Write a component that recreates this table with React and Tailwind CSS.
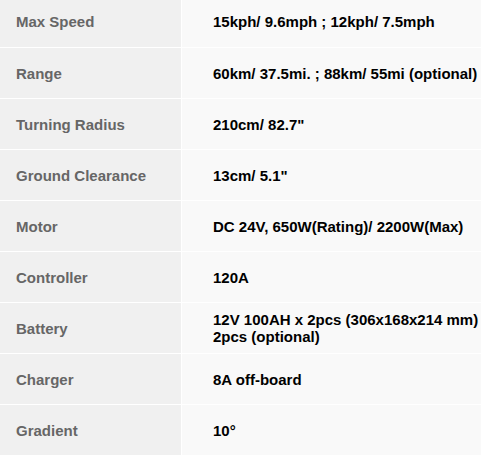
import React from 'react'

const specs = [
  ['Max Speed', '15kph/ 9.6mph ; 12kph/ 7.5mph'],
  ['Range', '60km/ 37.5mi. ; 88km/ 55mi (optional)'],
  ['Turning Radius', '210cm/ 82.7"'],
  ['Ground Clearance', '13cm/ 5.1"'],
  ['Motor', 'DC 24V, 650W(Rating)/ 2200W(Max)'],
  ['Controller', '120A'],
  ['Battery', ['12V 100AH x 2pcs (306x168x214 mm)', '2pcs (optional)']],
  ['Charger', '8A off-board'],
  ['Gradient', '10°'],
]

export default function App() {
  return (
    <div className="w-[481px] h-[458px] overflow-hidden bg-white font-['Liberation_Sans',Arial,sans-serif] text-[15px] font-bold leading-[17px]">
      <div className="-mt-[4px]">
        {specs.map(([label, value], i) => (
          <div key={label} className={`flex h-[51px] ${i > 0 ? 'border-t border-white' : ''}`}>
            <div className="w-[181px] shrink-0 bg-[#f0f0f0] text-[#666666] flex items-center pl-[16px]">
              {label}
            </div>
            <div className="w-px bg-white" />
            <div className="flex-1 bg-[#f9f9f9] text-black flex flex-col justify-center pl-[31px] whitespace-nowrap">
              {Array.isArray(value) ? value.map(v => <div key={v}>{v}</div>) : value}
            </div>
          </div>
        ))}
      </div>
    </div>
  )
}
